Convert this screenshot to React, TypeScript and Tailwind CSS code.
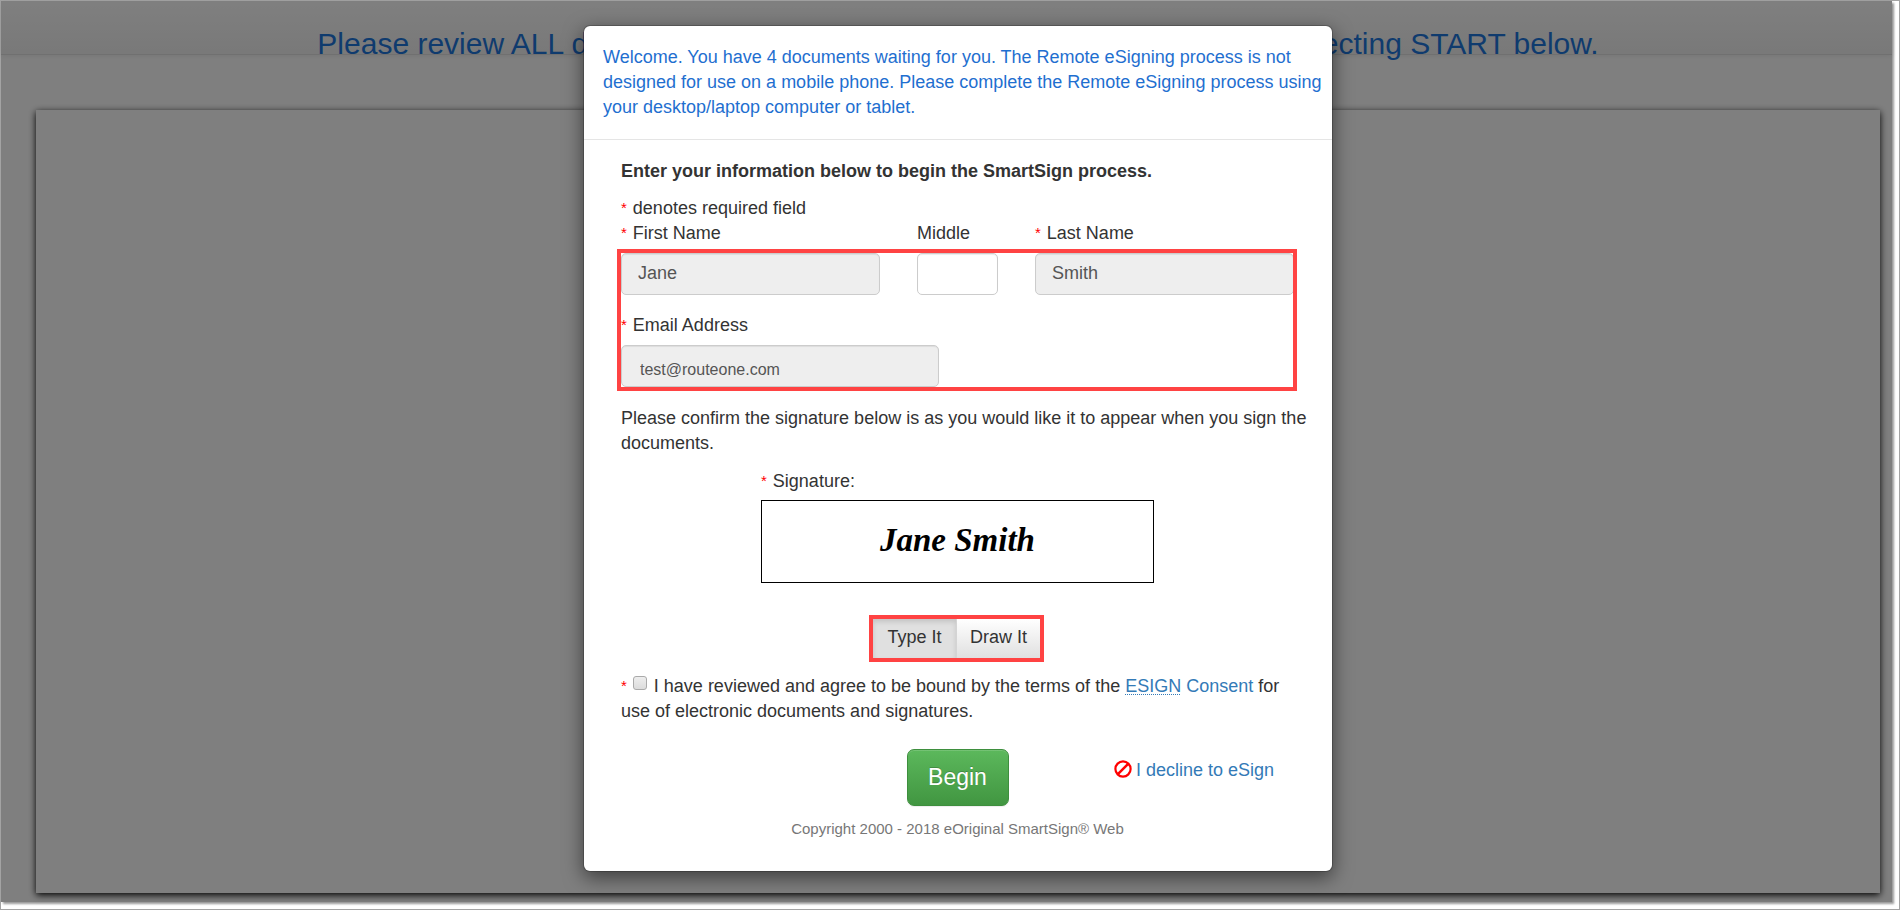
import { useState } from "react";
import type { InputHTMLAttributes, ReactNode } from "react";

function Required() {
  return <span className="mr-1.5 align-[1px] text-[15px] leading-none text-[#ff0000]">*</span>;
}

interface FieldProps extends InputHTMLAttributes<HTMLInputElement> {
  id: string;
  label: ReactNode;
  required?: boolean;
  wrapperClass?: string;
  textClass?: string;
}

function Field({ id, label, required, wrapperClass = "", textClass = "px-4 pb-0.5 text-lg", ...rest }: FieldProps) {
  return (
    <div className={`flex flex-col gap-[7px] ${wrapperClass}`}>
      <label htmlFor={id} className="whitespace-nowrap">
        {required && <Required />}
        {label}
      </label>
      <input
        id={id}
        className={`h-[42px] w-full rounded-[5px] border border-[#cccccc] bg-white text-[#555555] shadow-[inset_0_1px_1px_rgba(0,0,0,0.075)] read-only:bg-[#eeeeee] ${textClass}`}
        {...rest}
      />
    </div>
  );
}

function BanIcon() {
  return (
    <svg viewBox="0 0 18 18" className="mb-1 size-[18px]" fill="none" stroke="#ff0000" aria-hidden="true">
      <circle cx="9" cy="9" r="7.6" strokeWidth="2.2" />
      <path d="M3.9 14.1 14.1 3.9" strokeWidth="2.5" />
    </svg>
  );
}

function Backdrop() {
  return (
    <div className="relative flex flex-col bg-white pr-3 pl-[35px] [grid-area:1/1]">
      <div className="absolute inset-x-0 top-0 h-[54px] border-b border-[#e0e0e0] bg-linear-to-b from-white to-[#f2f2f2] shadow-[0_1px_5px_rgba(0,0,0,0.075)]" />
      <h1 className="relative mt-[26px] text-center text-[30px] leading-[33px] whitespace-nowrap text-[#1f77dc]">
        Please review ALL documents provided in this signature package before selecting START below.
      </h1>
      <div className="mt-[50px] mb-[9px] flex-1 bg-white shadow-[0_2px_7px_#000000]" />
    </div>
  );
}

export default function App() {
  const [mode, setMode] = useState<"type" | "draw">("type");
  const [agreed, setAgreed] = useState(false);

  const modeClass = (active: boolean) =>
    active
      ? "flex-1 border-r border-[#d4d4d4] bg-[#e0e0e0] pb-0.5 shadow-[inset_0_3px_5px_rgba(0,0,0,0.125)]"
      : "flex-1 bg-linear-to-b from-white to-[#e0e0e0] pb-0.5";

  return (
    <div className="flex min-h-screen flex-col border border-[#a3a3a3] bg-white pr-[7px] pb-[7px] font-['Liberation_Sans',Arial,sans-serif] text-lg leading-[25px] text-[#333333]">
      <div className="grid flex-1 grid-cols-1 shadow-[2px_2px_2px_rgba(0,0,0,0.4)]">
        <Backdrop />
        <div className="relative flex items-start justify-center bg-black/50 pt-6 pr-3 pb-[29px] pl-[35px] [grid-area:1/1]">
          <div
            role="dialog"
            aria-modal="true"
            aria-labelledby="welcome"
            className="w-full max-w-[750px] rounded-[7px] border border-black/20 bg-white bg-clip-padding shadow-[0_6px_19px_rgba(0,0,0,0.5)]"
          >
            <header className="border-b border-[#e5e5e5] py-[19px] pr-2 pl-[19px]">
              <p id="welcome" className="text-[#1f6fd0]">
                Welcome. You have 4 documents waiting for you. The Remote eSigning process is not designed for
                use on a mobile phone. Please complete the Remote eSigning process using your desktop/laptop
                computer or tablet.
              </p>
            </header>

            <form className="pt-[19px] pr-[38px] pb-8 pl-[37px]" onSubmit={(e) => e.preventDefault()}>
              <h2 className="font-bold">Enter your information below to begin the SmartSign process.</h2>
              <p className="mt-3">
                <Required />
                denotes required field
              </p>

              <div className="relative flex flex-col gap-[18px]">
                <div className="flex gap-[37px]">
                  <Field id="first" label="First Name" required readOnly value="Jane" wrapperClass="min-w-0 flex-1" />
                  <Field id="middle" label="Middle" wrapperClass="w-[81px]" />
                  <Field id="last" label="Last Name" required readOnly value="Smith" wrapperClass="min-w-0 flex-1" />
                </div>
                <Field
                  id="email"
                  label="Email Address"
                  required
                  readOnly
                  type="email"
                  value="test@routeone.com"
                  wrapperClass="w-[318px] max-w-full"
                  textClass="px-[18px] pt-2 text-base"
                />
                <div className="pointer-events-none absolute top-7 -right-[3px] -bottom-1 -left-1 border-4 border-[#ff4343]" />
              </div>

              <p className="mt-[19px] -mr-4">
                Please confirm the signature below is as you would like it to appear when you sign the documents.
              </p>

              <section className="mx-auto mt-[13px] flex max-w-[393px] flex-col gap-1.5">
                <p>
                  <Required />
                  Signature:
                </p>
                <div className="flex h-[83px] items-center justify-center border border-black pb-1 text-[33px] leading-10 font-bold text-black italic font-['Brush_Script_MT','Liberation_Serif',serif]">
                  Jane Smith
                </div>
              </section>

              <div className="mt-9 flex justify-center pr-0.5">
                <div className="relative flex h-[39px] w-[167px]">
                  <button type="button" aria-pressed={mode === "type"} onClick={() => setMode("type")} className={modeClass(mode === "type")}>
                    Type It
                  </button>
                  <button type="button" aria-pressed={mode === "draw"} onClick={() => setMode("draw")} className={modeClass(mode === "draw")}>
                    Draw It
                  </button>
                  <div className="pointer-events-none absolute -inset-1 border-4 border-[#ff4343]" />
                </div>
              </div>

              <p className="mt-4">
                <Required />
                <input
                  id="agree"
                  type="checkbox"
                  checked={agreed}
                  onChange={(e) => setAgreed(e.target.checked)}
                  className="mr-[7px] size-3.5 appearance-none rounded-[3px] border border-[#aaaaaa] bg-linear-to-b from-[#eeeeee] to-[#dcdcdc] align-[2px] checked:bg-[#337ab7]"
                />
                <label htmlFor="agree">I have reviewed and agree to be bound by the terms of the </label>
                <a href="#consent" className="text-[#337ab7]">
                  <abbr title="Electronic Signatures" className="underline decoration-dotted decoration-1 underline-offset-2">
                    ESIGN
                  </abbr>{" "}
                  Consent
                </a>{" "}
                for
                <br />
                use of electronic documents and signatures.
              </p>

              <div className="mt-[25px] grid grid-cols-[1fr_auto_1fr] items-start">
                <button
                  type="submit"
                  className="col-start-2 h-[57px] w-[102px] rounded-[7px] border border-[#3e8f3e] bg-linear-to-b from-[#5cb85c] to-[#419641] text-[23px] text-white shadow-[inset_0_1px_0_rgba(255,255,255,0.15),0_1px_1px_rgba(0,0,0,0.075)] [text-shadow:0_-1px_0_rgba(0,0,0,0.2)]"
                >
                  Begin
                </button>
                <a href="#decline" className="mt-[9px] mr-5 flex items-center gap-1 justify-self-end text-[#337ab7]">
                  <BanIcon />
                  I decline to eSign
                </a>
              </div>

              <p className="mt-3 text-center text-[15px] leading-[21px] text-[#777777]">
                Copyright 2000 - 2018 eOriginal SmartSign® Web
              </p>
            </form>
          </div>
        </div>
      </div>
    </div>
  );
}
